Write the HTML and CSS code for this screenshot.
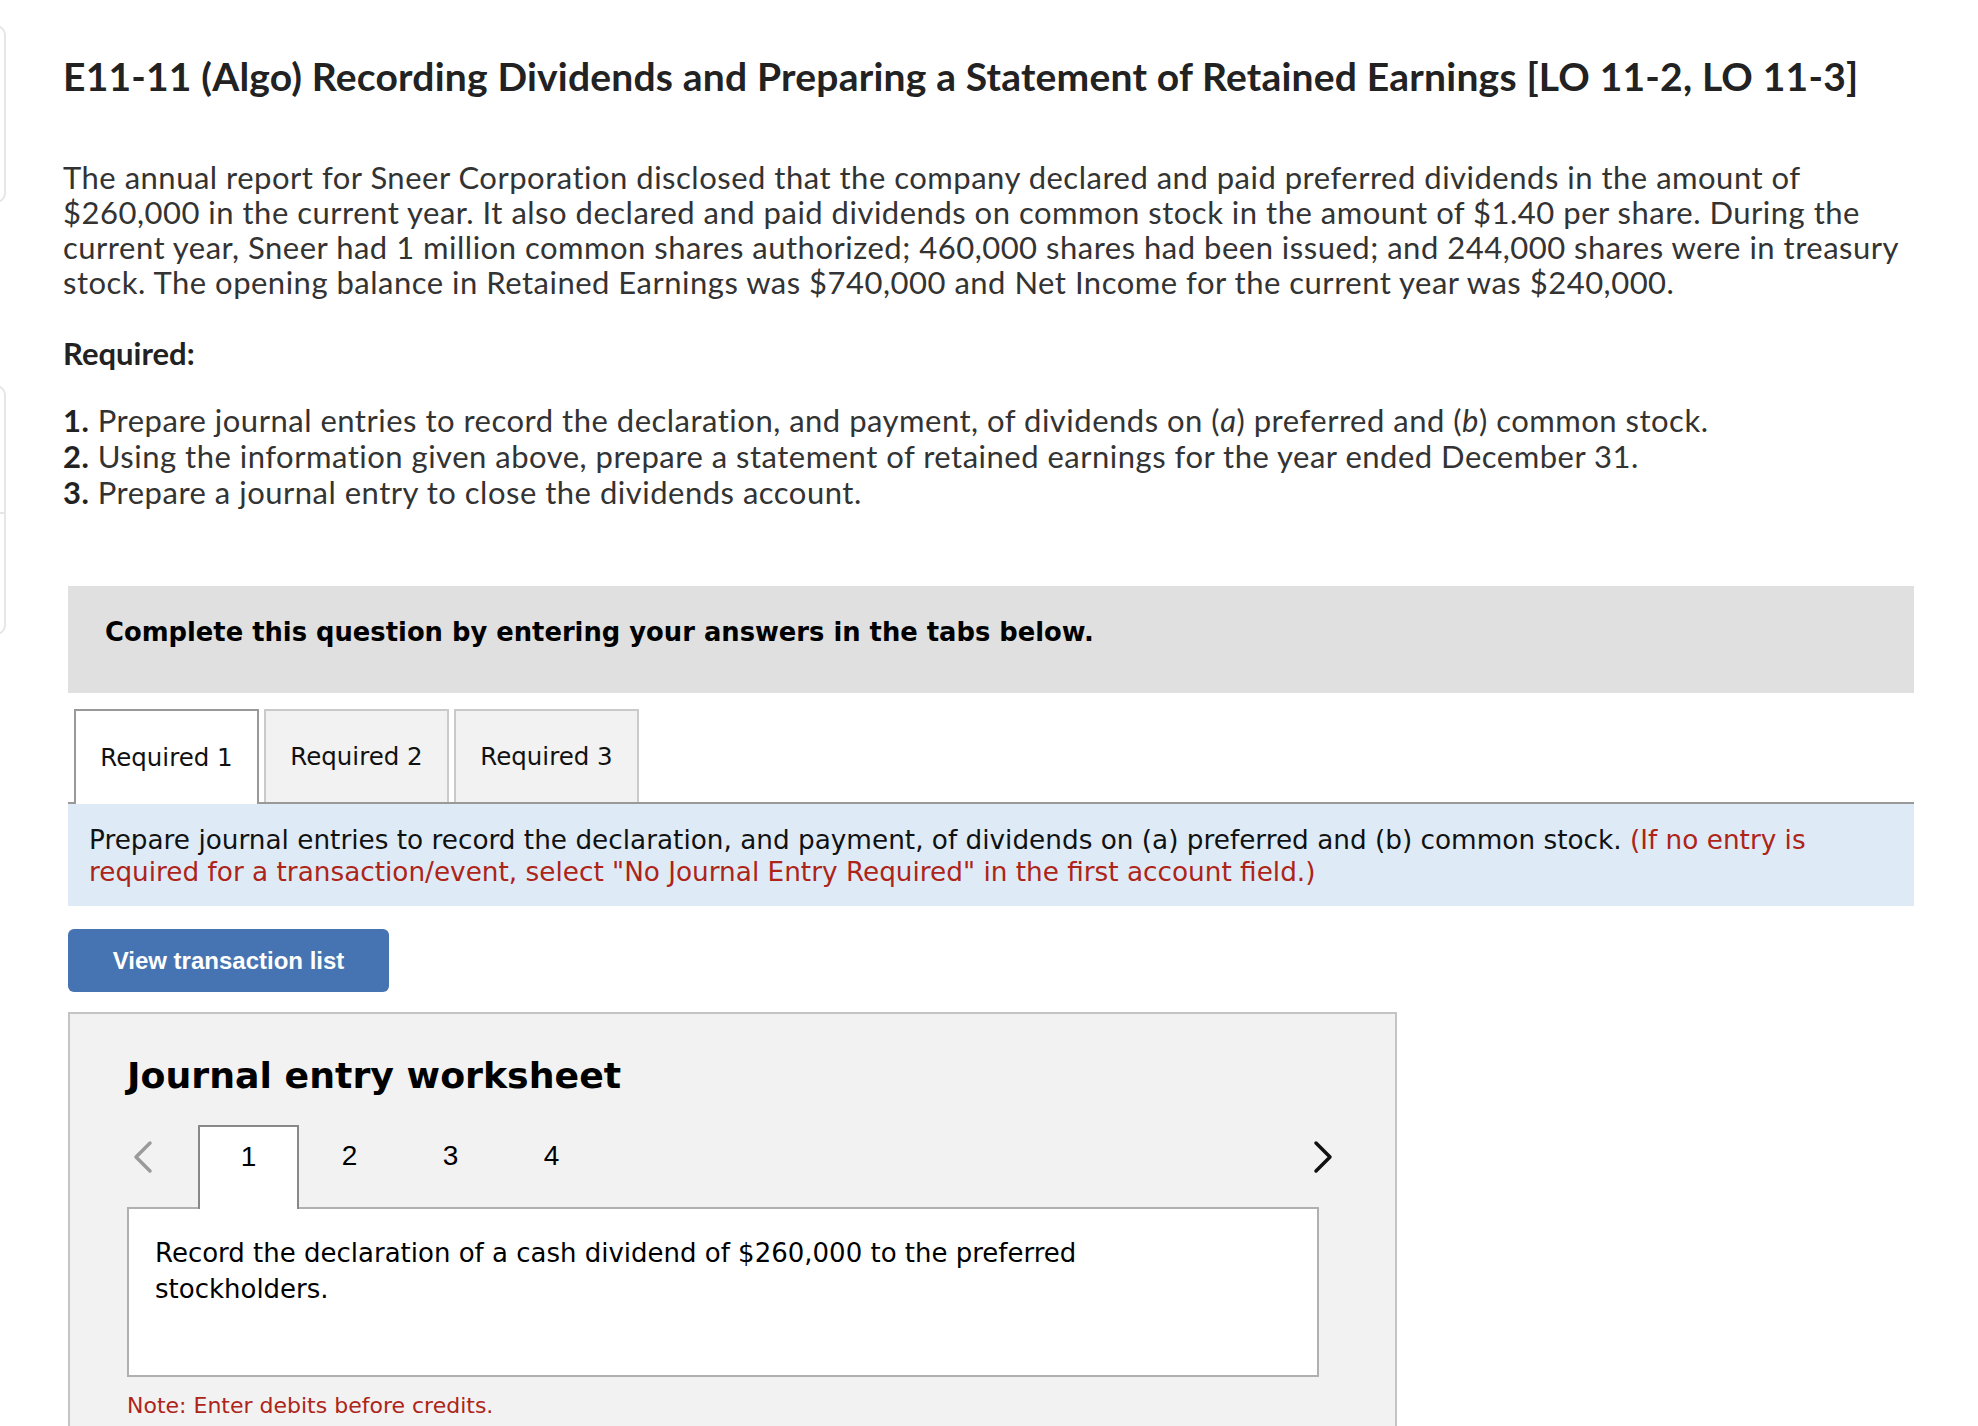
FILE: index.html
```
<!DOCTYPE html>
<html lang="en">
<head>
  <meta charset="UTF-8" />
  <title>E11-11 (Algo) Recording Dividends</title>
  <link rel="stylesheet" href="styles.css">
</head>
<body>
  <div class="page">
    <div class="rail">
      <div class="rail-card card-top"></div>
      <div class="rail-card card-split">
        <div class="split-part"></div>
        <div class="split-part"></div>
      </div>
    </div>

    <div class="main">
      <h1 class="title">E11-11 (Algo) Recording Dividends and Preparing a Statement of Retained Earnings [LO 11-2, LO 11-3]</h1>

      <p class="intro">The annual report for Sneer Corporation disclosed that the company declared and paid preferred dividends in the amount of $260,000 in the current year. It also declared and paid dividends on common stock in the amount of $1.40 per share. During the current year, Sneer had 1 million common shares authorized; 460,000 shares had been issued; and 244,000 shares were in treasury stock. The opening balance in Retained Earnings was $740,000 and Net Income for the current year was $240,000.</p>

      <h2 class="required">Required:</h2>
      <ol class="req-list">
        <li><b>1.</b> Prepare journal entries to record the declaration, and payment, of dividends on (<i>a</i>) preferred and (<i>b</i>) common stock.</li>
        <li><b>2.</b> Using the information given above, prepare a statement of retained earnings for the year ended December 31.</li>
        <li><b>3.</b> Prepare a journal entry to close the dividends account.</li>
      </ol>

      <div class="answer-area">
        <div class="notice">Complete this question by entering your answers in the tabs below.</div>

        <div class="tabs">
          <div class="tab active">Required 1</div>
          <div class="tab">Required 2</div>
          <div class="tab">Required 3</div>
        </div>

        <div class="instructions">
          Prepare journal entries to record the declaration, and payment, of dividends on (a) preferred and (b) common stock.
          <span class="red">(If no entry is required for a transaction/event, select "No Journal Entry Required" in the first account field.)</span>
        </div>

        <button class="btn-view">View transaction list</button>

        <div class="worksheet">
          <h3>Journal entry worksheet</h3>
          <div class="ws-nav">
            <span class="chev chev-left">
              <svg width="22" height="34" viewBox="0 0 22 34"><polyline points="18,3 4,17 18,31" fill="none" stroke="#9a9a9a" stroke-width="3.5" stroke-linecap="round" stroke-linejoin="round"/></svg>
            </span>
            <div class="ws-tab active">1</div>
            <div class="ws-tab">2</div>
            <div class="ws-tab">3</div>
            <div class="ws-tab">4</div>
            <span class="chev chev-right">
              <svg width="22" height="34" viewBox="0 0 22 34"><polyline points="4,3 18,17 4,31" fill="none" stroke="#111" stroke-width="3.5" stroke-linecap="round" stroke-linejoin="round"/></svg>
            </span>
          </div>
          <div class="ws-box">
            <p>Record the declaration of a cash dividend of $260,000 to the preferred stockholders.</p>
          </div>
          <p class="note">Note: Enter debits before credits.</p>
        </div>
      </div>
    </div>
  </div>
</body>
</html>
```
FILE: styles.css
```
* {
  box-sizing: border-box;
}
body {
  margin: 0;
  background: #fff;
  font-family: 'Lato', 'Liberation Sans', sans-serif;
  color: #2b2b2b;
}
.page {
  display: flex;
  align-items: flex-start;
}

/* cut-off cards on the far left */
.rail {
  width: 6px;
  flex-shrink: 0;
  overflow: hidden;
}
.rail-card {
  margin-left: -16px;
  width: 22px;
  border: 2px solid #e6e6e6;
  border-radius: 10px;
}
.card-top {
  margin-top: 25px;
  height: 178px;
}
.card-split {
  margin-top: 182px;
  height: 250px;
}
.split-part {
  height: 125px;
}
.split-part + .split-part {
  border-top: 2px solid #e6e6e6;
}

.main {
  padding-left: 57px;
  width: 1918px;
}
.title {
  margin: 54px 0 0;
  font-size: 39px;
  line-height: 44px;
  font-weight: 700;
  letter-spacing: 0.2px;
  color: #222;
}
.intro {
  margin: 62px 0 0;
  width: 1865px;
  font-size: 31px;
  line-height: 35px;
  letter-spacing: 0.5px;
  color: #333;
}
.required {
  margin: 36px 0 0;
  font-size: 31px;
  line-height: 35px;
  font-weight: 700;
  color: #222;
}
.req-list {
  list-style: none;
  margin: 31px 0 0;
  padding: 0;
  font-size: 31px;
  line-height: 36px;
  letter-spacing: 0.5px;
  color: #333;
}
.req-list b {
  color: #222;
}

/* answer section */
.answer-area {
  margin: 76px 0 0 5px;
  width: 1846px;
  font-family: 'DejaVu Sans', Verdana, sans-serif;
  color: #111;
}
.notice {
  background: #e0e0e0;
  height: 107px;
  padding: 30px 0 0 37px;
  font-size: 25.8px;
  line-height: 32px;
  font-weight: 700;
  color: #000;
}
.tabs {
  display: flex;
  align-items: flex-end;
  gap: 5px;
  margin-top: 16px;
  padding-left: 6px;
  border-bottom: 2px solid #999;
  height: 95px;
}
.tab {
  width: 185px;
  height: 93px;
  display: flex;
  align-items: center;
  justify-content: center;
  background: #f2f2f2;
  border: 2px solid #cacaca;
  border-bottom: none;
  font-size: 24.5px;
  color: #111;
}
.tab.active {
  background: #fff;
  border-color: #999;
  height: 95px;
  margin-bottom: -2px;
}
.instructions {
  background: #deebf7;
  padding: 20px 21px 18px;
  font-size: 26.3px;
  line-height: 32px;
  color: #111;
}
.red {
  color: #ad2418;
}
.btn-view {
  display: block;
  margin-top: 23px;
  width: 321px;
  height: 63px;
  border: none;
  border-radius: 6px;
  background: #4674b2;
  color: #fff;
  font-family: 'Liberation Sans', Arial, sans-serif;
  font-weight: 700;
  font-size: 24px;
}
.worksheet {
  margin-top: 20px;
  width: 1329px;
  height: 440px;
  background: #f2f2f2;
  border: 2px solid #c4c4c4;
  border-bottom: none;
  padding: 41px 0 0 57px;
}
.worksheet h3 {
  margin: 0;
  font-size: 36.3px;
  line-height: 42px;
  font-weight: 700;
  color: #000;
}
.ws-nav {
  display: flex;
  align-items: flex-end;
  margin-top: 26px;
  width: 1207px;
  height: 84px;
}
.chev {
  align-self: flex-start;
  margin-top: 17px;
  display: flex;
}
.chev-left {
  width: 71px;
  padding-left: 5px;
}
.chev-right {
  margin-left: auto;
}
.ws-tab {
  width: 101px;
  height: 82px;
  display: flex;
  align-items: center;
  justify-content: center;
  padding-bottom: 20px;
  font-family: 'Liberation Sans', Arial, sans-serif;
  font-size: 28px;
  color: #000;
}
.ws-tab.active {
  background: #fff;
  border: 2px solid #888;
  border-bottom: none;
  height: 84px;
  padding-bottom: 22px;
  margin-bottom: -2px;
}
.ws-box {
  width: 1192px;
  height: 170px;
  background: #fff;
  border: 2px solid #b0b0b0;
  padding: 26px 26px 0;
}
.ws-box p {
  margin: 0;
  max-width: 1000px;
  font-size: 26px;
  line-height: 36px;
  color: #000;
}
.note {
  margin: 16px 0 0;
  font-size: 22px;
  line-height: 26px;
  color: #ad2418;
}
```
